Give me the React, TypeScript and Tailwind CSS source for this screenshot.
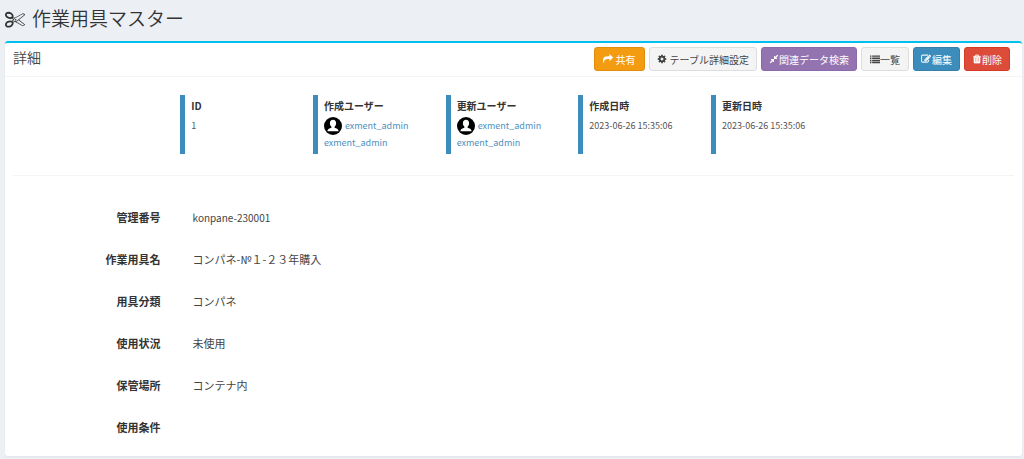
import React from "react";

const icons = {
  scissors:
    "M960 896q26 0 45 19t19 45-19 45-45 19-45-19-19-45 19-45 45-19zm300 64l507 398q28 20 25 56-5 35-35 51l-128 64q-13 7-29 7-17 0-31-8l-690-387-110 66q-8 4-12 5 14 49 10 97-7 77-56 147.5t-132 123.5q-132 84-277 84-136 0-222-78-90-84-79-207 7-76 56-147t131-124q132-84 278-84 83 0 151 31 9-13 22-22l122-73-122-73q-13-9-22-22-68 31-151 31-146 0-278-84-82-53-131-124t-56-147q-5-59 15.5-113t63.5-93q85-79 222-79 145 0 277 84 83 52 132 123t56 148q4 48-10 97 4 1 12 5l110 66 690-387q14-8 31-8 16 0 29 7l128 64q30 16 35 51 3 36-25 56zm-681-260q46-42 21-108t-106-117q-92-59-192-59-74 0-113 36-46 42-21 108t106 117q92 59 192 59 74 0 113-36zm-85 745q81-51 106-117t-21-108q-39-36-113-36-100 0-192 59-81 51-106 117t21 108q39 36 113 36 100 0 192-59zm178-613l96 58v-11q0-36 33-56l14-8-79-44-26 26q-3 3-10 11t-12 12q-2 2-4 3.500t-3 2.500zm224 224l96 32 736-576-128-64-768 431v113l-160 96 9 8q2 2 7 6 4 4 11 12t11 12l26 26zm704 416l128-64-520-408-177 138q-2 3-13 7z",
  share:
    "M1792 640q0 26-19 45l-512 512q-19 19-45 19t-45-19-19-45v-256h-224q-98 0-175.5 6t-154 21.5-133 42.5-105.5 69.5-80 101-48.5 138.5-17.5 181q0 55 5 123 0 6 2.5 23.5t2.5 26.5q0 15-8.5 25t-23.5 10q-16 0-28-17-7-9-13-22t-13.500-30-10.500-24q-127-285-127-451 0-199 53-333 162-403 875-403h224v-256q0-26 19-45t45-19 45 19l512 512q19 19 19 45z",
  cog: "M1152 896q0-106-75-181t-181-75-181 75-75 181 75 181 181 75 181-75 75-181zm512-109v222q0 12-8 23t-20 13l-185 28q-19 54-39 91 35 50 107 138 10 12 10 25t-9 23q-27 37-99 108t-94 71q-12 0-26-9l-138-108q-44 23-91 38-16 136-29 186-7 28-36 28h-222q-14 0-24.5-8.5t-11.5-21.5l-28-184q-49-16-90-37l-141 107q-10 9-25 9-14 0-25-11-126-114-165-168-7-10-7-23 0-12 8-23 15-21 51-66.5t54-70.5q-27-50-41-99l-183-27q-13-2-21-12.5t-8-23.5v-222q0-12 8-23t19-13l186-28q14-46 39-92-40-57-107-138-10-12-10-24 0-10 9-23 26-36 98.5-107.5t94.5-71.5q13 0 26 10l138 107q44-23 91-38 16-136 29-186 7-28 36-28h222q14 0 24.5 8.5t11.5 21.5l28 184q49 16 90 37l142-107q9-9 24-9 13 0 25 10 129 119 165 170 7 8 7 22 0 12-8 23-15 21-51 66.5t-54 70.5q26 50 41 98l183 28q13 2 21 12.5t8 23.5z",
  compress:
    "M896 960v448q0 26-19 45t-45 19-45-19l-144-144-332 332q-10 10-23 10t-23-10l-114-114q-10-10-10-23t10-23l332-332-144-144q-19-19-19-45t19-45 45-19h448q26 0 45 19t19 45zm755-672q0 13-10 23l-332 332 144 144q19 19 19 45t-19 45-45 19h-448q-26 0-45-19t-19-45v-448q0-26 19-45t45-19 45 19l144 144 332-332q10-10 23-10t23 10l114 114q10 10 10 23z",
  list: "M0 256h256v256h-256zM384 256h1408v256h-1408zM0 640h256v256h-256zM384 640h1408v256h-1408zM0 1024h256v256h-256zM384 1024h1408v256h-1408zM0 1408h256v256h-256zM384 1408h1408v256h-1408z",
  edit: "M888 1184l116-116-152-152-116 116v56h96v96h56zm440-720q-16-16-33 1l-350 350q-17 17-1 33t33-1l350-350q17-17 1-33zm80 594v190q0 119-84.5 203.5t-203.5 84.5h-832q-119 0-203.5-84.5t-84.5-203.5v-832q0-119 84.5-203.5t203.5-84.5h832q63 0 117 25 15 7 18 23 3 17-9 29l-49 49q-14 14-32 8-23-6-45-6h-832q-66 0-113 47t-47 113v832q0 66 47 113t113 47h832q66 0 113-47t47-113v-126q0-13 9-22l64-64q15-15 35-7t20 29zm-96-738l288 288-672 672h-288v-288zm444 132l-92 92-288-288 92-92q28-28 68-28t68 28l152 152q28 28 28 68t-28 68z",
  trash:
    "M704 1376v-704q0-14-9-23t-23-9h-20q-14 0-23 9t-9 23v704q0 14 9 23t23 9h20q14 0 23-9t9-23zm234 0v-704q0-14-9-23t-23-9h-20q-14 0-23 9t-9 23v704q0 14 9 23t23 9h20q14 0 23-9t9-23zm234 0v-704q0-14-9-23t-23-9h-20q-14 0-23 9t-9 23v704q0 14 9 23t23 9h20q14 0 23-9t9-23zM672 384h448l-48-117q-7-9-17-11h-317q-10 2-17 11zm928 32v64q0 14-9 23t-23 9h-96v948q0 83-47 143.500t-113 60.500h-832q-66 0-113-58.500t-47-141.500v-952h-96q-14 0-23-9t-9-23v-64q0-14 9-23t23-9h309l70-167q15-37 54-63t79-26h320q40 0 79 26t54 63l70 167h309q14 0 23 9t9 23z",
};

function Icon({ name, className }: { name: keyof typeof icons; className: string }) {
  return (
    <svg viewBox="0 0 1792 1792" fill="currentColor" aria-hidden="true" className={`shrink-0 ${className}`}>
      <path d={icons[name]} />
    </svg>
  );
}

const actions: { icon: keyof typeof icons; label: string; tone: string; iconTone?: string }[] = [
  { icon: "share", label: "共有", tone: "gap-[3px] px-2 bg-[#f39c12] border-[#e08e0b] text-white" },
  { icon: "cog", label: "テーブル詳細設定", tone: "gap-[3px] px-[7px] bg-[#f4f4f4] border-[#ddd] text-[#444]" },
  { icon: "compress", label: "関連データ検索", tone: "px-[7px] bg-[#9474b0] border-[#8b69aa] text-white" },
  { icon: "list", label: "一覧", tone: "px-2 bg-[#f4f4f4] border-[#ddd] text-[#444]" },
  {
    icon: "edit",
    label: "編集",
    tone: "gap-px px-[7px] bg-[#3c8dbc] border-[#367fa9] text-white",
    iconTone: "stroke-current stroke-[60]",
  },
  {
    icon: "trash",
    label: "削除",
    tone: "px-[7px] bg-[#dd4b39] border-[#d73925] text-white",
    iconTone: "stroke-current stroke-[40]",
  },
];

function User() {
  return (
    <div className="text-[9px] leading-4 text-[#4d90c0]">
      <a href="#user" className="flex items-center gap-[3px]">
        <svg viewBox="0 0 18 18" aria-hidden="true" className="size-[18px] shrink-0">
          <circle cx="9" cy="9" r="9" fill="#000" />
          <path
            d="M9 2.800c2 0 3.100 1.500 3.100 3.400 0 1.500-.6 2.800-1.500 3.500v1c1.900.5 3.600 1.200 4.100 3.500H3.300c.5-2.300 2.200-3 4.100-3.500v-1C6.500 9 5.900 7.700 5.900 6.200 5.900 4.300 7 2.800 9 2.800z"
            fill="#fff"
          />
        </svg>
        exment_admin
      </a>
      <a href="#user" className="block">
        exment_admin
      </a>
    </div>
  );
}

const summary: { label: string; value: React.ReactNode }[] = [
  { label: "ID", value: "1" },
  { label: "作成ユーザー", value: <User /> },
  { label: "更新ユーザー", value: <User /> },
  { label: "作成日時", value: "2023-06-26 15:35:06" },
  { label: "更新日時", value: "2023-06-26 15:35:06" },
];

const fields = [
  { label: "管理番号", value: "konpane-230001", size: "text-[10px]" },
  { label: "作業用具名", value: "コンパネ-№１-２３年購入", size: "text-[11px]" },
  { label: "用具分類", value: "コンパネ", size: "text-[11px]" },
  { label: "使用状況", value: "未使用", size: "text-[11px]" },
  { label: "保管場所", value: "コンテナ内", size: "text-[11px]" },
  { label: "使用条件", value: "", size: "text-[11px]" },
];

export default function App() {
  return (
    <div className="min-h-screen bg-[#ecf0f5] pb-[3px] font-['Noto_Sans_CJK_JP',sans-serif] text-[#333]">
      <header className="flex h-[41px] items-center pb-1 pl-[5px]">
        <h1 className="flex items-center gap-[7px] text-[19px] font-[350]">
          <Icon name="scissors" className="size-5" />
          作業用具マスター
        </h1>
      </header>
      <main className="mr-[2px] ml-[5px] rounded-[3px] border-t-2 border-[#00c0ef] bg-white shadow-xs">
        <div className="flex h-[34px] items-center justify-between border-b border-[#f4f4f4] pr-3 pl-2">
          <h2 className="pb-1 text-[14px] font-[350] text-[#444]">詳細</h2>
          <div className="flex gap-1 pb-px">
            {actions.map((a) => (
              <button
                key={a.label}
                type="button"
                className={`flex h-6 items-center rounded-[3px] border text-[10px] whitespace-nowrap ${a.tone}`}
              >
                <Icon name={a.icon} className={`size-[10px] ${a.iconTone ?? ""}`} />
                {a.label}
              </button>
            ))}
          </div>
        </div>
        <div className="mx-2 border-b border-[#f4f4f4] pt-[18px] pb-[21px]">
          <dl className="mr-[17%] ml-[16.7%] grid grid-cols-5">
            {summary.map((s) => (
              <div key={s.label} className="h-[59px] border-l-[5px] border-[#3c8dbc] pl-1.5">
                <dt className="pt-[3px] text-[10px] leading-4 font-bold">{s.label}</dt>
                <dd className="pt-[3px] text-[9px] leading-[18px] text-[#555]">{s.value}</dd>
              </div>
            ))}
          </dl>
        </div>
        <dl className="pt-5 pb-2">
          {fields.map((f) => (
            <div key={f.label} className="flex h-[42px] items-center">
              <dt className="w-[15.3%] text-right text-[11px] font-bold">{f.label}</dt>
              <dd className={`ml-8 text-[#444] ${f.size}`}>{f.value}</dd>
            </div>
          ))}
        </dl>
      </main>
    </div>
  );
}
